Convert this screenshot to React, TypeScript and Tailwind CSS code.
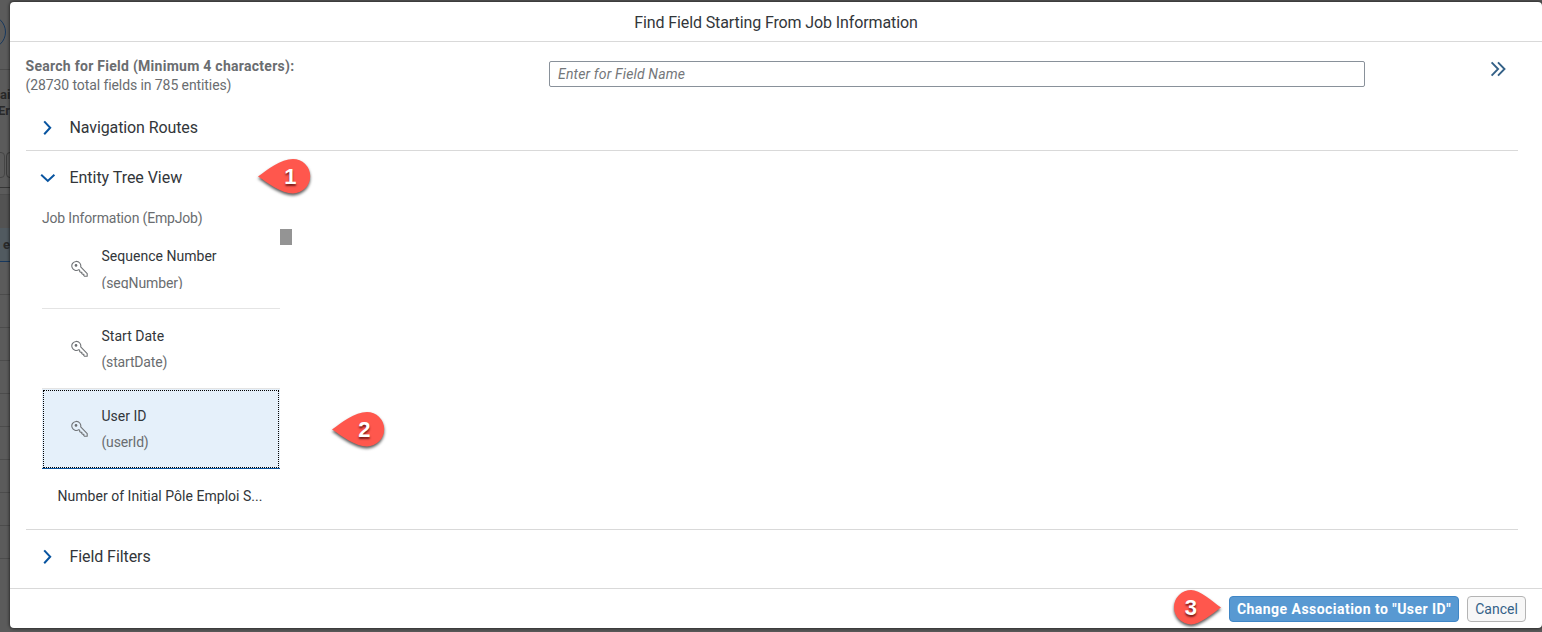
import React from 'react';

function Chevron({ down = false }: { down?: boolean }) {
  return (
    <svg className="h-4 w-4 shrink-0" viewBox="0 0 16 16" fill="none" stroke="#0854a0" strokeWidth="2">
      <path d={down ? 'M1.2 4.8 7.8 11 14.4 4.8' : 'M4.2 1.4 10.2 7.8 4.2 14.2'} />
    </svg>
  );
}

function KeyIcon() {
  return (
    <svg className="h-[18px] w-[18px] shrink-0" viewBox="0 0 18 18" fill="none" stroke="#707376" strokeWidth="1.1" strokeLinejoin="round">
      <path d="M9.7 6.9 16.2 13.6V16.3H13.6L12.7 15.4 12.9 14.2H11.4L10.7 13.4 10.9 12.3H9.5L8.7 11.5V10.4L7.9 9.6A4.5 4.5 0 1 1 9.7 6.9Z" />
      <circle cx="5" cy="5.4" r="1.3" fill="#6a6d70" stroke="none" />
    </svg>
  );
}

function Marker({ n, flip = false }: { n: string; flip?: boolean }) {
  return (
    <svg className="h-[44px] w-[60px] overflow-visible" viewBox="0 0 60 44">
      <g style={{ filter: 'drop-shadow(0 2px 1.5px rgba(0,0,0,.65))' }}>
        <path
          d={
            flip
              ? 'M56 20.5C47 14 34.5 3 26.2 3A17.2 17.2 0 0 0 26.2 37.4C34.5 37.4 47 27 56 20.5Z'
              : 'M4 20.5C13 14 27 3 39 3A17.2 17.2 0 0 1 39 37.4C27 37.4 14 27 4 20.5Z'
          }
          fill="#ff574d"
        />
      </g>
      <text
        x={flip ? 25.8 : 36.4}
        y="28"
        textAnchor="middle"
        fill="#fff"
        className="font-['Liberation_Sans'] text-[22px] font-bold [text-shadow:0_2px_2px_rgba(60,0,0,.7)]"
      >
        {n}
      </text>
    </svg>
  );
}

function KeyRow({ name, code, selected = false, clipped = false }: { name: string; code: string; selected?: boolean; clipped?: boolean }) {
  return (
    <div
      className={
        selected
          ? 'flex h-20 items-start border-b border-[#0854a0] bg-[#e5f0fa] outline-1 -outline-offset-2 outline-dotted outline-black'
          : 'flex h-20 items-start border-b border-[#e4e4e4]'
      }
    >
      <div className="pt-[31px] pl-[29px]">
        <KeyIcon />
      </div>
      <div className="pl-[12.5px]">
        <div className="pt-[18px] text-[14px] leading-[19px] tracking-[0.02px] text-[#32363a]">{name}</div>
        <div
          className={
            clipped
              ? 'mt-2 h-[15px] overflow-hidden text-[14px] leading-[19px] tracking-[-0.1px] text-[#6a6d70]'
              : 'mt-[7px] text-[14px] leading-[19px] tracking-[-0.18px] text-[#6a6d70]'
          }
        >
          {code}
        </div>
      </div>
    </div>
  );
}

function PageBehind() {
  return (
    <div className="flex h-full w-[10px] shrink-0 flex-col overflow-hidden bg-[#5b5b5b] text-[13px] font-bold text-[#292929]">
      <div className="h-[70px] border-b border-[#4b4b4b] pt-[15px]">
        <div className="-ml-[28px] h-[34px] w-[34px] rounded-full border border-[#17385e]" />
      </div>
      <div className="h-[82px] pt-[17px] leading-4">
        <div>ai</div>
        <div className="-ml-[2px]">Er</div>
      </div>
      <div className="flex h-[26px] gap-px">
        <div className="-ml-5 w-[25px] shrink-0 rounded border border-[#454545]" />
        <div className="w-[25px] shrink-0 rounded border border-[#3c3c3c]" />
      </div>
      <div className="h-[10px] border-b border-[#373737]" />
      <div className="h-[7px] border-b border-[#4d4d4d]" />
      <div className="h-[33px] bg-[#535353]" />
      <div className="flex h-[34px] items-center border-b border-[#17385e] bg-[#515a60] pl-[3px]">e</div>
      {[1, 2, 3, 4, 5, 6, 7, 8, 9].map((i) => (
        <div key={i} className="h-[33px] shrink-0 border-b border-[#4c4c4c]" />
      ))}
    </div>
  );
}

export default function App() {
  return (
    <div className="flex h-[632px] w-[1542px] overflow-hidden bg-[#595959] font-[Roboto,sans-serif] text-[#32363a]">
      <PageBehind />
      <div className="relative mt-[2px] flex h-[626px] w-[1532px] flex-col rounded bg-white shadow-[0_0_3px_1px_rgba(0,0,0,.5)]">
        <header className="flex h-10 items-center justify-center border-b border-[#d9d9d9] pt-[2px] text-[16px]">
          <span className="tracking-[-0.11px]">Find Field Starting From Job Information</span>
        </header>

        <div className="flex h-[61px] pl-[15.5px]">
          <div className="w-[523.5px] pt-[15px] text-[14px] leading-[19px] text-[#6a6d70]">
            <div className="tracking-[0.27px] font-bold">Search for Field (Minimum 4 characters):</div>
            <div className="tracking-[-0.09px]">(28730 total fields in 785 entities)</div>
          </div>
          <input
            className="mt-[19px] h-[26px] w-[816px] rounded-[2px] border border-[#89919a] px-2 text-[14px] tracking-[0.16px] italic outline-none placeholder:text-[#74777a]"
            placeholder="Enter for Field Name"
          />
          <svg className="mt-[19px] ml-[125px] h-4 w-4" viewBox="0 0 16 16" fill="none" stroke="#346187" strokeWidth="1.9">
            <path d="M1.6 1.3 8.1 8 1.6 14.7M8 1.3 14.5 8 8 14.7" />
          </svg>
        </div>

        <div className="mr-6 ml-4">
          <div className="flex h-12 items-center gap-[13.5px] border-b border-[#d9d9d9] pt-[2px] pl-[14px] text-[16px]">
            <Chevron />
            <span className="tracking-[-0.11px]">Navigation Routes</span>
          </div>
          <div className="h-[379px] border-b border-[#d9d9d9]">
            <div className="flex h-[53px] items-center gap-[13.5px] pl-[14px] text-[16px]">
              <Chevron down />
              <span className="tracking-[-0.04px]">Entity Tree View</span>
            </div>
            <div className="pl-4">
              <div className="h-[25px] pt-[5px] text-[14px] leading-[19px] tracking-[-0.17px] text-[#6a6d70]">Job Information (EmpJob)</div>
              <div className="flex h-[284px]">
                <div className="w-[238px]">
                  <KeyRow name="Sequence Number" code="(seqNumber)" clipped />
                  <KeyRow name="Start Date" code="(startDate)" />
                  <KeyRow name="User ID" code="(userId)" selected />
                  <div className="pt-[18px] pl-[15.5px] text-[14px] leading-[19px] tracking-[0.03px]">Number of Initial Pôle Emploi S...</div>
                </div>
                <div className="h-4 w-3 bg-[#949494]" />
              </div>
            </div>
          </div>
          <div className="flex h-[58px] items-center gap-[13.5px] pb-1 pl-[14px] text-[16px]">
            <Chevron />
            <span className="tracking-[-0.08px]">Field Filters</span>
          </div>
        </div>

        <footer className="flex h-10 items-start justify-end gap-2 border-t border-[#d9d9d9] pt-[7px] pr-4 text-[14px]">
          <button className="h-[26px] w-[230px] rounded border border-[#3f86c6] bg-[#5899d2] font-bold tracking-[0.46px] whitespace-nowrap text-white">Change Association to "User ID"</button>
          <button className="h-[26px] w-[59px] rounded border border-[#b4b4b4] bg-[#f7f7f7] text-[#346187]">Cancel</button>
        </footer>

        <div className="absolute top-[154px] left-[244px]"><Marker n="1" /></div>
        <div className="absolute top-[407px] left-[318px]"><Marker n="2" /></div>
        <div className="absolute top-[585px] left-[1155px]"><Marker n="3" flip /></div>
      </div>
    </div>
  );
}
